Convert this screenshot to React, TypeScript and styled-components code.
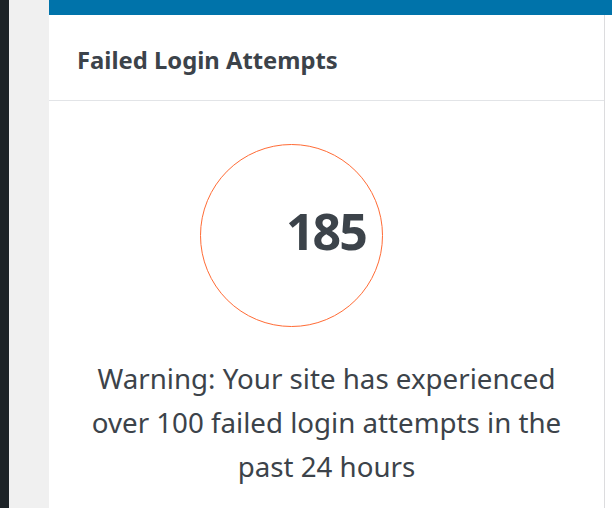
import React from "react";
import styled, { createGlobalStyle } from "styled-components";

const Global = createGlobalStyle`
  html, body { margin: 0; padding: 0; background: #f0f0f0; }
  body { font-family: "Noto Sans", "Open Sans", sans-serif; }
`;

const Page = styled.div`
  display: flex;
  height: 508px;
  overflow: hidden;
`;

const AdminMenu = styled.div`
  width: 9px;
  background: #1d2327;
  flex-shrink: 0;
`;

const Gutter = styled.div`
  width: 40px;
  background: #f0f0f0;
  flex-shrink: 0;
`;

const Main = styled.div`
  flex: 1;
  display: flex;
  flex-direction: column;
  background: #fff;
`;

const TopBar = styled.div`
  height: 15px;
  background: #0073aa;
`;

const Card = styled.div`
  width: 555px;
  flex: 1;
  border-right: 1px solid #dcdcde;
  background: #fff;
`;

const Header = styled.div`
  height: 86px;
  box-sizing: border-box;
  border-bottom: 1px solid #e2e4e7;
  padding: 4px 28px 0;
  display: flex;
  align-items: center;
`;

const Title = styled.h2`
  margin: 0;
  font-size: 23.8px;
  font-weight: 700;
  color: #3c434a;
`;

const Body = styled.div`
  padding-top: 43px;
  display: flex;
  flex-direction: column;
`;

const CircleRow = styled.div`
  padding-left: 151px;
`;

const Circle = styled.div`
  width: 183px;
  height: 183px;
  box-sizing: border-box;
  border: 1.6px solid #ff6b35;
  border-radius: 50%;
  display: flex;
  align-items: center;
  padding-left: 85px;
  padding-bottom: 9px;
`;

const Count = styled.span`
  font-size: 50px;
  font-weight: 700;
  color: #3c434a;
  line-height: 1;
  letter-spacing: -2px;
`;

const Message = styled.p`
  margin: 29px 0 0;
  text-align: center;
  font-size: 27.7px;
  line-height: 44px;
  color: #3c434a;
  padding: 0 30px;
`;

export default function App() {
  return (
    <>
      <Global />
      <Page>
        <AdminMenu />
        <Gutter />
        <Main>
          <TopBar />
          <Card>
            <Header>
              <Title>Failed Login Attempts</Title>
            </Header>
            <Body>
              <CircleRow>
                <Circle>
                  <Count>185</Count>
                </Circle>
              </CircleRow>
              <Message>
                Warning: Your site has experienced over 100 failed login attempts in the past 24 hours
              </Message>
            </Body>
          </Card>
        </Main>
      </Page>
    </>
  );
}
